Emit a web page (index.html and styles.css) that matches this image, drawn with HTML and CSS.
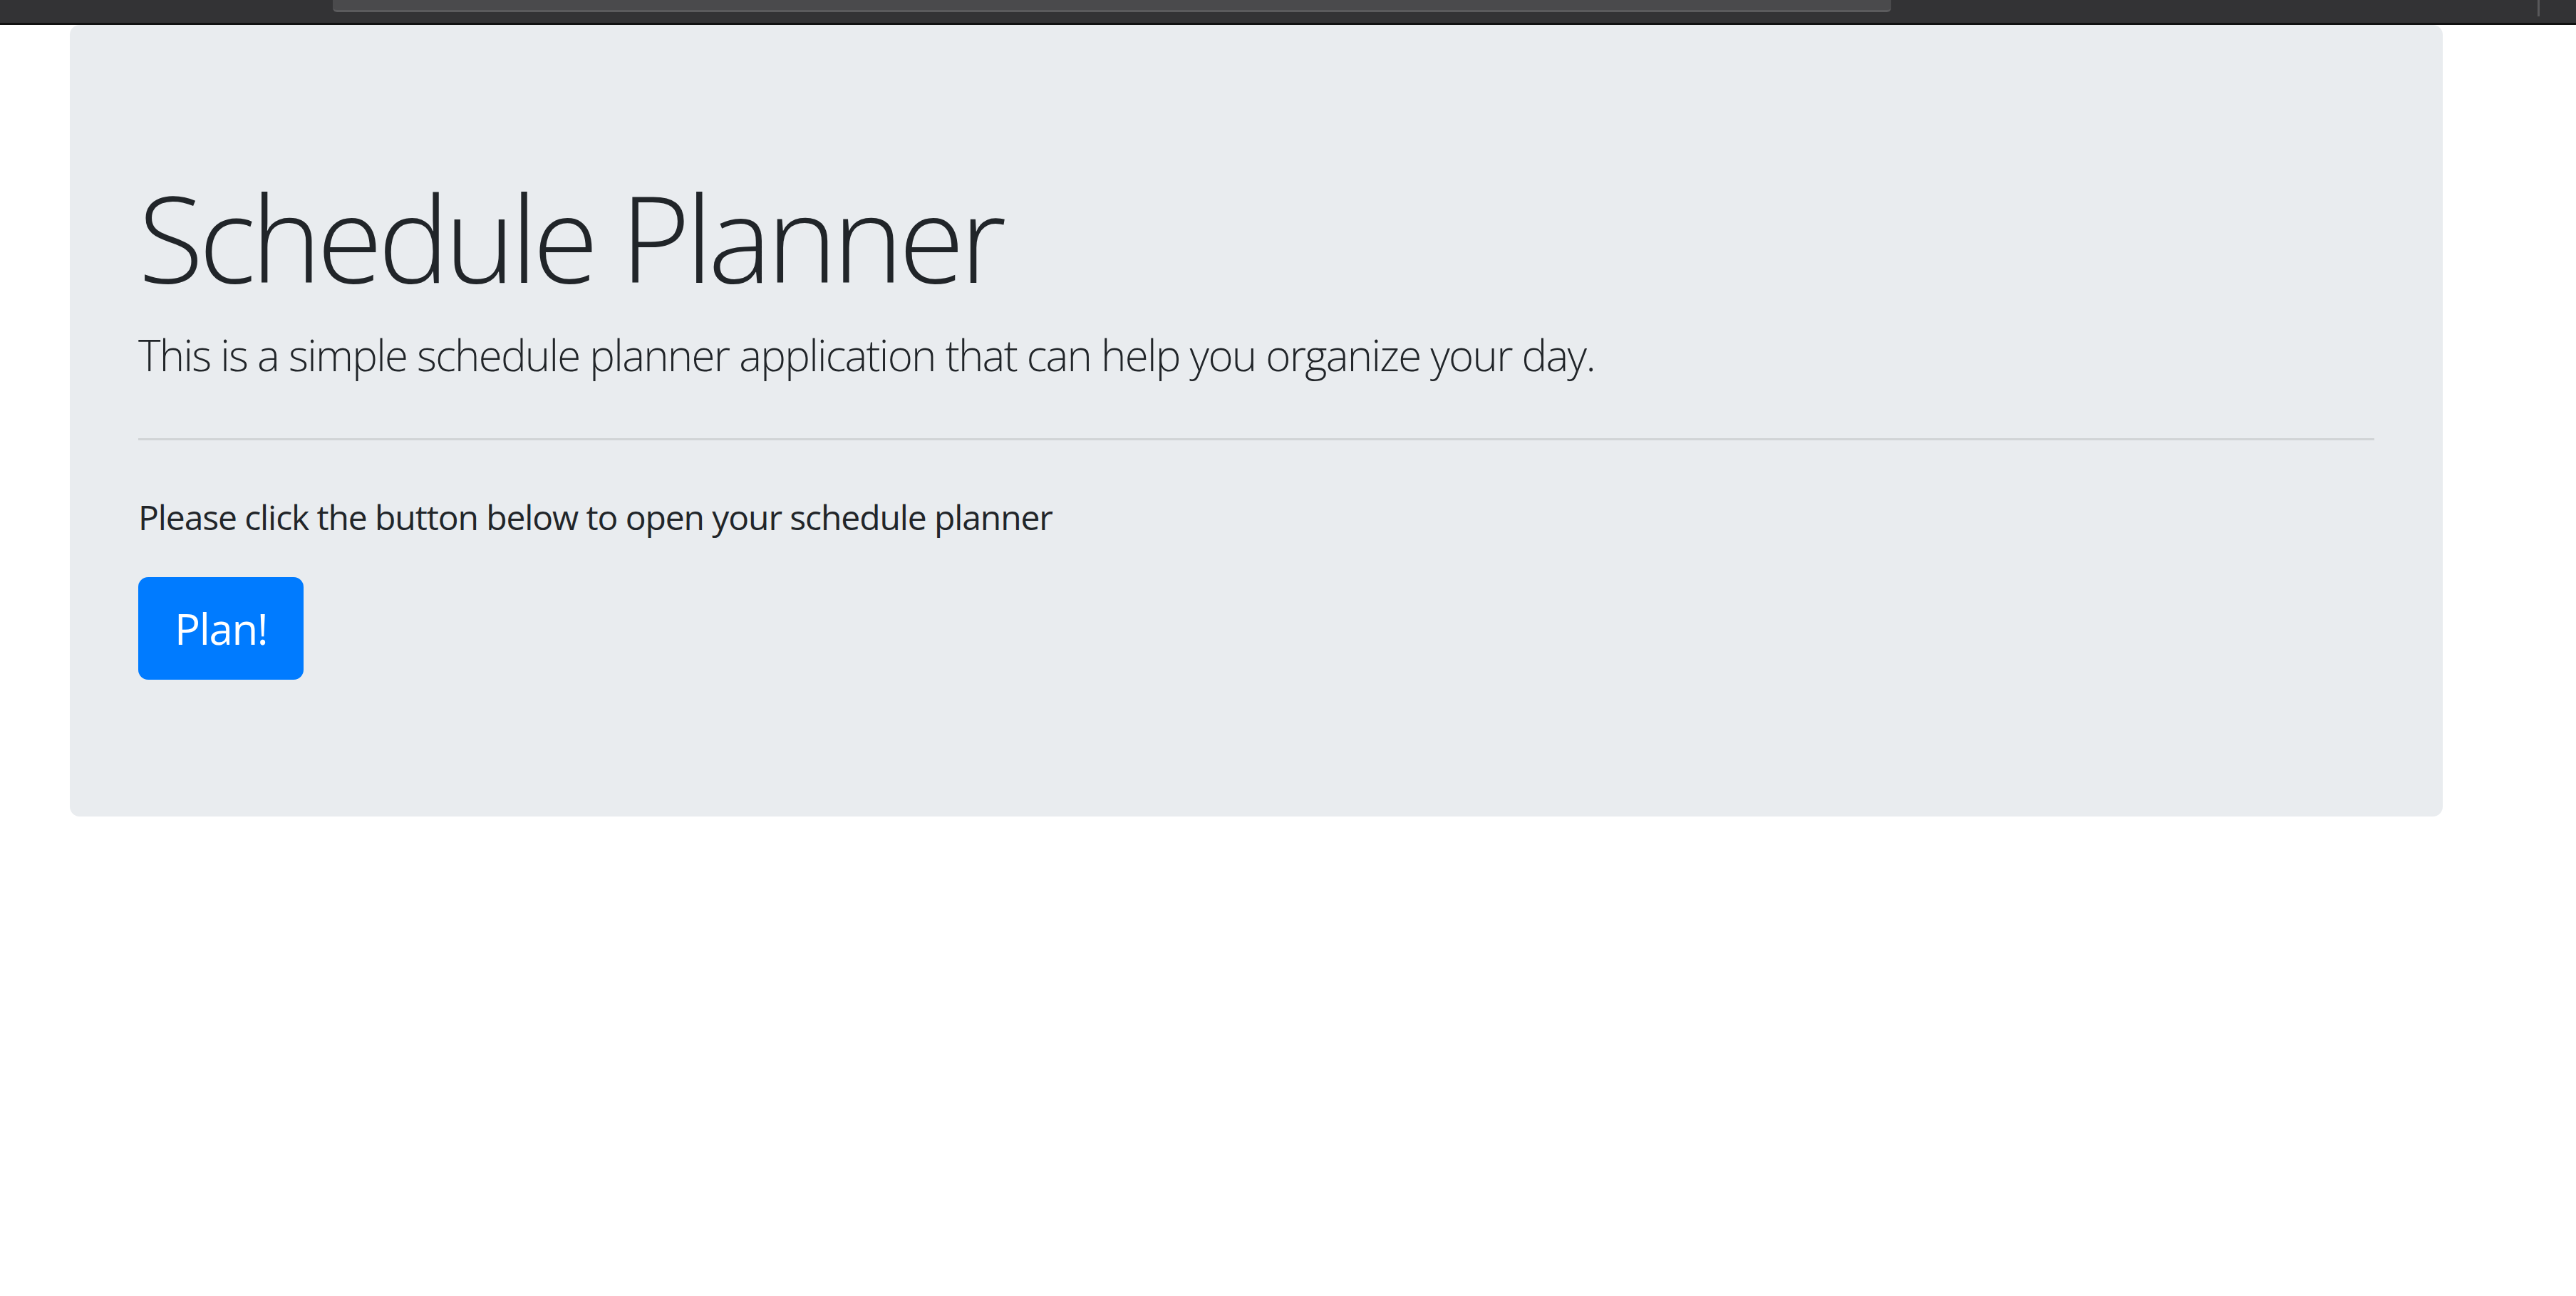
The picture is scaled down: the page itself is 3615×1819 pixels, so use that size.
FILE: index.html
```html
<!DOCTYPE html>
<html lang="en">
<head>
<meta charset="utf-8">
<title>Schedule Planner</title>
<link rel="stylesheet" href="styles.css">
</head>
<body>
  <div class="topbar">
    <div class="urlbar"></div>
    <div class="divider"></div>
  </div>
  <main class="page">
    <section class="jumbotron">
      <h1 class="display">Schedule Planner</h1>
      <p class="lead">This is a simple schedule planner application that can help you organize your day.</p>
      <hr class="sep">
      <p class="note">Please click the button below to open your schedule planner</p>
      <div class="actions">
        <a class="btn" href="#">Plan!</a>
      </div>
    </section>
  </main>
</body>
</html>
```

FILE: styles.css
```css
html, body {
  margin: 0;
  padding: 0;
  background: #ffffff;
}

body {
  font-family: "Open Sans", "Noto Sans", "Liberation Sans", sans-serif;
  color: #212529;
}

.topbar {
  display: flex;
  align-items: flex-start;
  height: 32px;
  background: #333335;
  border-bottom: 3px solid #111111;
}

.urlbar {
  margin-left: 467px;
  width: 2187px;
  height: 14px;
  background: #4a4a4c;
  border-bottom: 3px solid #5b5b5d;
  border-radius: 0 0 6px 6px;
  box-sizing: content-box;
}

.divider {
  margin-left: 907px;
  width: 3px;
  height: 23px;
  background: #58585a;
}

.page {
  display: block;
}

.jumbotron {
  box-sizing: border-box;
  margin-left: 98px;
  width: 3330px;
  padding: 192px 96px;
  background: #e9ecef;
  border-radius: 14px;
}

.display {
  margin: 0 0 20px;
  padding-top: 4px;
  font-size: 168px;
  font-weight: 300;
  line-height: 201.6px;
  letter-spacing: -6.6px;
}

.lead {
  margin: 0 0 48px;
  padding-top: 1px;
  font-size: 60px;
  font-weight: 300;
  line-height: 89px;
  letter-spacing: -1.75px;
}

.sep {
  margin: 72px 0;
  height: 0;
  border: 0;
  border-top: 3px solid rgba(0, 0, 0, 0.1);
}

.note {
  margin: 0 0 48px;
  font-size: 48px;
  font-weight: 400;
  line-height: 72px;
  letter-spacing: -1.1px;
}

.actions {
  display: flex;
}

.btn {
  display: inline-block;
  padding: 24px 48px;
  font-size: 60px;
  line-height: 90px;
  font-weight: 400;
  letter-spacing: -1.4px;
  color: #ffffff;
  background: #007bff;
  border: 3px solid #007bff;
  border-radius: 14px;
  text-decoration: none;
}
```
